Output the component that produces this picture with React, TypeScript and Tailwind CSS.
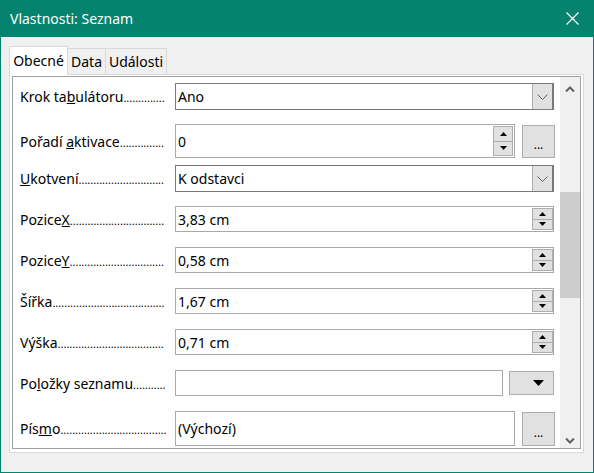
import React from "react";

function Label({ children, dots }: { children: React.ReactNode; dots: number }) {
  return (
    <div className="w-[146px] shrink-0 flex items-baseline whitespace-nowrap">
      <span className="shrink-0">{children}</span>
      <span className="text-[11px] leading-none">{".".repeat(dots)}</span>
    </div>
  );
}

function Chevron() {
  return (
    <svg width="11" height="6" viewBox="0 0 11 6">
      <path d="M0.5 0.5 L5.5 5.5 L10.5 0.5" fill="none" stroke="#606060" strokeWidth="1" />
    </svg>
  );
}

function TriUp({ w = 7, h = 4 }: { w?: number; h?: number }) {
  return (
    <svg width={w} height={h} viewBox={`0 0 ${w} ${h}`}>
      <polygon points={`0,${h} ${w},${h} ${w / 2},0`} fill="#000" />
    </svg>
  );
}

function TriDown({ w = 7, h = 4 }: { w?: number; h?: number }) {
  return (
    <svg width={w} height={h} viewBox={`0 0 ${w} ${h}`}>
      <polygon points={`0,0 ${w},0 ${w / 2},${h}`} fill="#000" />
    </svg>
  );
}

function ListBox({ value }: { value: string }) {
  return (
    <div className="w-[379px] h-[27px] border border-[#7a7a7a] bg-white flex">
      <div className="flex-1 pl-[2px] flex items-center">{value}</div>
      <div className="w-[21px] bg-[#e1e1e1] border-l border-[#adadad] border-r border-r-[#7a7a7a] flex items-center justify-center">
        <Chevron />
      </div>
    </div>
  );
}

function SpinButtons() {
  return (
    <div className="w-[21px] flex flex-col py-[1px]">
      <div className="flex-1 bg-[#e1e1e1] border border-[#adadad] flex items-center justify-center">
        <TriUp />
      </div>
      <div className="flex-1 bg-[#e1e1e1] border border-[#adadad] border-t-0 flex items-center justify-center">
        <TriDown />
      </div>
    </div>
  );
}

function SpinField({ value }: { value: string }) {
  return (
    <div className="w-[379px] h-[26px] border border-[#a9a9a9] bg-white flex">
      <div className="flex-1 pl-[2px] flex items-center">{value}</div>
      <SpinButtons />
    </div>
  );
}

function DotsButton({ h }: { h: string }) {
  return (
    <div className={`w-[33px] ${h} ml-[7px] bg-[#e1e1e1] border border-[#adadad] flex items-end justify-center pb-[6px] text-[12px] leading-none`}>
      ...
    </div>
  );
}

function Row({ mt, h, children }: { mt: string; h: string; children: React.ReactNode }) {
  return (
    <div className={`${mt} ${h} flex items-center`}>
      {children}
    </div>
  );
}

export default function App() {
  return (
    <div className="w-[594px] h-[473px] bg-[#06836f] px-[1px] pb-[1px] flex flex-col font-['Noto_Sans',sans-serif] text-black text-[14px]">
      <div className="h-[37px] shrink-0 flex items-center justify-between pl-[9px] pr-[14px] text-white text-[14px]">
        <span className="-mt-[1px]">Vlastnosti: Seznam</span>
        <svg width="13" height="13" viewBox="0 0 13 13">
          <path d="M0.5 0.5 L12.5 12.5 M12.5 0.5 L0.5 12.5" stroke="#fff" strokeWidth="1.2" />
        </svg>
      </div>
      <div className="flex-1 bg-[#f0f0f0] flex flex-col pt-[9px] pl-[8px]">
        <div className="h-[28px] flex items-end">
          <div className="relative z-10 w-[59px] h-[29px] -mb-[1px] bg-white border border-b-0 border-[#d9d9d9] flex items-center justify-center pb-[1px]">
            Obecné
          </div>
          <div className="w-[38px] h-[26px] border-t border-r border-[#d9d9d9] flex items-center justify-center">
            Data
          </div>
          <div className="w-[61px] h-[26px] border-t border-r border-[#d9d9d9] flex items-center justify-center">
            Události
          </div>
        </div>
        <div className="w-[575px] h-[379px] border border-[#d9d9d9] bg-white pt-[1px] px-[2px] pb-[3px]">
          <div className="h-[373px] border border-[#a0a0a0] flex">
            <div className="flex-1 bg-white pl-[7px] flex flex-col">
              <Row mt="mt-[6px]" h="h-[27px]">
                <Label dots={14}>Krok ta<u>b</u>ulátoru</Label>
                <div className="ml-[9px]"><ListBox value="Ano" /></div>
              </Row>
              <Row mt="mt-[14px]" h="h-[34px]">
                <Label dots={15}>Pořadí <u>a</u>ktivace</Label>
                <div className="ml-[9px] w-[340px] h-[34px] border border-[#a9a9a9] bg-white flex">
                  <div className="flex-1 pl-[2px] flex items-center">0</div>
                  <div className="w-[20px] mr-[1px] flex flex-col py-[1px]">
                    <div className="flex-1 bg-[#e1e1e1] border border-[#adadad] flex items-center justify-center"><TriUp /></div>
                    <div className="flex-1 bg-[#e1e1e1] border border-[#adadad] border-t-0 flex items-center justify-center"><TriDown /></div>
                  </div>
                </div>
                <DotsButton h="h-[33px]" />
              </Row>
              <Row mt="mt-[7px]" h="h-[27px]">
                <Label dots={29}><u>U</u>kotvení</Label>
                <div className="ml-[9px]"><ListBox value="K odstavci" /></div>
              </Row>
              <Row mt="mt-[14px]" h="h-[26px]">
                <Label dots={32}>Pozice<u>X</u></Label>
                <div className="ml-[9px]"><SpinField value="3,83 cm" /></div>
              </Row>
              <Row mt="mt-[15px]" h="h-[26px]">
                <Label dots={32}>Pozice<u>Y</u></Label>
                <div className="ml-[9px]"><SpinField value="0,58 cm" /></div>
              </Row>
              <Row mt="mt-[15px]" h="h-[26px]">
                <Label dots={38}>Šířka</Label>
                <div className="ml-[9px]"><SpinField value="1,67 cm" /></div>
              </Row>
              <Row mt="mt-[15px]" h="h-[26px]">
                <Label dots={36}>Výška</Label>
                <div className="ml-[9px]"><SpinField value="0,71 cm" /></div>
              </Row>
              <Row mt="mt-[15px]" h="h-[26px]">
                <Label dots={11}>Po<u>l</u>ožky seznamu</Label>
                <div className="ml-[9px] w-[328px] h-[26px] border border-[#a9a9a9] bg-white" />
                <div className="ml-[6px] w-[45px] h-[24px] bg-[#e1e1e1] border border-[#adadad] flex items-center justify-end pr-[9px]">
                  <TriDown w={11} h={6} />
                </div>
              </Row>
              <Row mt="mt-[15px]" h="h-[35px]">
                <Label dots={36}>Pís<u>m</u>o</Label>
                <div className="ml-[9px] w-[340px] h-[35px] border border-[#a9a9a9] bg-white flex items-center pl-[2px]">
                  (Výchozí)
                </div>
                <DotsButton h="h-[34px]" />
              </Row>
            </div>
            <div className="w-[20px] bg-[#f0f0f0] flex flex-col">
              <div className="h-[23px] flex justify-center pt-[9px]">
                <svg width="10" height="6" viewBox="0 0 10 6">
                  <path d="M1 5.5 L5 1.5 L9 5.5" fill="none" stroke="#606060" strokeWidth="2" />
                </svg>
              </div>
              <div className="mt-[92px] h-[106px] bg-[#cdcdcd]" />
              <div className="flex-1" />
              <div className="h-[20px] flex justify-center pt-[10px]">
                <svg width="10" height="6" viewBox="0 0 10 6">
                  <path d="M1 0.5 L5 4.5 L9 0.5" fill="none" stroke="#606060" strokeWidth="2" />
                </svg>
              </div>
            </div>
          </div>
        </div>
      </div>
    </div>
  );
}
